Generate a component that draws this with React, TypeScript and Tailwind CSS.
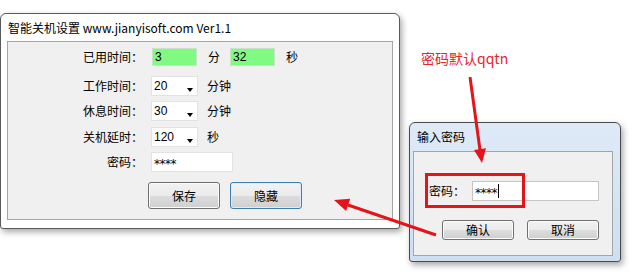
import React from "react";

const cjk = "font-['Noto_Sans_CJK_SC','Liberation_Sans',sans-serif]";
const latin = "font-['Liberation_Sans','Noto_Sans_CJK_SC',sans-serif]";
const stars = "font-['DejaVu_Sans',sans-serif]";

function WinButton({ label, focused }: { label: string; focused?: boolean }) {
  return (
    <div
      className={`flex items-center justify-center w-[72px] h-full rounded-[3px] border text-[12px] text-black bg-[linear-gradient(#f2f2f2,#ebebeb_50%,#dddddd_51%,#cfcfcf)] ${
        focused
          ? "border-[#3c7fb1] shadow-[inset_0_0_0_1px_#dcecfc]"
          : "border-[#707070] shadow-[inset_0_0_0_1px_#fcfcfc]"
      }`}
    >
      {label}
    </div>
  );
}

function Combo({ value }: { value: string }) {
  return (
    <div className="relative w-[47px] h-full bg-white border border-[#e2e2e2] flex items-center pl-[2px]">
      <span className={`${latin} text-[12px] text-black`}>{value}</span>
      <span className="absolute right-[4px] top-[11px] w-0 h-0 border-l-[3.5px] border-r-[3.5px] border-t-[4px] border-l-transparent border-r-transparent border-t-black" />
    </div>
  );
}

function GreenBox({ value }: { value: string }) {
  return (
    <div className="w-[45px] h-full bg-[#80fa80] border border-[#c9e3c9] flex items-center pl-[2px]">
      <span className={`${latin} text-[12px] text-black`}>{value}</span>
    </div>
  );
}

function Label({ text }: { text: string }) {
  return <div className="w-[135px] text-right text-[12px] text-black leading-none">{text}</div>;
}

export default function App() {
  return (
    <div className={`relative w-[633px] h-[272px] bg-white overflow-hidden ${cjk}`}>
      {/* main settings window */}
      <div className="absolute left-0 top-[13px] w-[400px] h-[216px] bg-white border border-[#5a5a5a] rounded-t-[6px] rounded-b-[3px] shadow-[2px_3px_6px_rgba(0,0,0,0.35)] flex flex-col px-[6px] pb-[8px]">
        <div className="h-[27px] flex items-center pl-[1px] text-[12px] text-black">
          智能关机设置 www.jianyisoft.com Ver1.1
        </div>
        <div className="flex-1 bg-[#f0f0f0] border border-[#a5a5a5] flex flex-col pt-[6px]">
          <div className="h-[18px] flex items-center">
            <Label text="已用时间：" />
            <div className="ml-[9px] h-full">
              <GreenBox value="3" />
            </div>
            <span className="ml-[11px] text-[12px] text-black">分</span>
            <div className="ml-[10px] h-full">
              <GreenBox value="32" />
            </div>
            <span className="ml-[11px] text-[12px] text-black">秒</span>
          </div>

          <div className="mt-[10px] h-[20px] flex items-center">
            <Label text="工作时间：" />
            <div className="ml-[8px] h-full">
              <Combo value="20" />
            </div>
            <span className="ml-[9px] text-[12px] text-black">分钟</span>
          </div>

          <div className="mt-[5px] h-[20px] flex items-center">
            <Label text="休息时间：" />
            <div className="ml-[8px] h-full">
              <Combo value="30" />
            </div>
            <span className="ml-[9px] text-[12px] text-black">分钟</span>
          </div>

          <div className="mt-[6px] h-[20px] flex items-center">
            <Label text="关机延时：" />
            <div className="ml-[8px] h-full">
              <Combo value="120" />
            </div>
            <span className="ml-[9px] text-[12px] text-black">秒</span>
          </div>

          <div className="mt-[5px] h-[20px] flex items-center">
            <Label text="密码：" />
            <div className="ml-[8px] w-[82px] h-full bg-white border border-[#e2e2e2] flex items-center pl-[2px]">
              <span className={`${stars} text-[12px] text-black tracking-[-0.5px] pt-[3px]`}>****</span>
            </div>
          </div>

          <div className="mt-[10px] h-[27px] flex gap-[10px] pl-[140px]">
            <WinButton label="保存" />
            <WinButton label="隐藏" focused />
          </div>
        </div>
      </div>

      {/* password dialog */}
      <div className="absolute left-[409px] top-[122px] w-[212px] h-[140px] bg-[linear-gradient(#dfeaf7,#cddff1)] border border-[#4a4a4a] rounded-t-[6px] rounded-b-[3px] shadow-[2px_3px_6px_rgba(0,0,0,0.35)] flex flex-col pl-[3px] pr-[7px] pb-[5px]">
        <div className="h-[28px] flex items-center pl-[4px] text-[12px] text-black">输入密码</div>
        <div className="flex-1 bg-[#f0f0f0] border border-[#a5a5a5] flex flex-col pt-[29px]">
          <div className="h-[20px] flex items-center pl-[15px]">
            <span className="w-[43px] text-[12px] text-black">密码：</span>
            <div className="w-[127px] h-full bg-white border border-[#c5c5c5] flex items-center pl-[2px]">
              <span className={`${stars} text-[12px] text-black tracking-[-0.5px] pt-[3px]`}>****</span>
              <span className="ml-[1px] w-[1px] h-[14px] bg-black" />
            </div>
          </div>
          <div className="mt-[19px] h-[20px] flex gap-[13px] pl-[28px]">
            <WinButton label="确认" />
            <WinButton label="取消" />
          </div>
        </div>
      </div>

      {/* annotations */}
      <div className="absolute left-[425px] top-[173px] w-[100px] h-[35px] border-[3px] border-[#e3151a]" />
      <div className="absolute left-[421px] top-[51px] text-[14px] text-[#e5262b] leading-none">
        密码默认qqtn
      </div>
      <svg className="absolute inset-0 pointer-events-none" width="633" height="272">
        <line x1="470" y1="77" x2="480" y2="150" stroke="#e3151a" strokeWidth="3" />
        <polygon points="486,148.3 474,149.9 482,163" fill="#e3151a" />
        <line x1="436" y1="235" x2="348" y2="205" stroke="#e3151a" strokeWidth="3" />
        <polygon points="350.3,198.8 346.1,211 334,200" fill="#e3151a" />
      </svg>
    </div>
  );
}
